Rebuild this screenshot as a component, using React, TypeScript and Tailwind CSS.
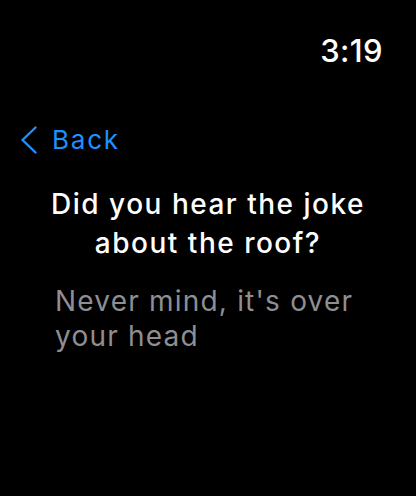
// Watch-style joke screen: clock, back button, prompt and punchline.
export default function App() {
  return (
    <div
      className="w-[416px] h-[496px] bg-black text-white flex flex-col overflow-hidden"
      style={{ fontFamily: "Inter, 'Noto Sans', sans-serif" }}
    >
      <div className="flex justify-end pt-[33px] pr-[33px]">
        <span className="text-[31px] font-medium leading-[36px] tracking-[0.4px]">3:19</span>
      </div>

      <button className="flex items-center mt-[55px] ml-[21px] text-[#1e90ff] self-start">
        <svg width="16" height="28" viewBox="0 0 16 28" fill="none" stroke="currentColor" strokeWidth="2.4" strokeLinecap="round" strokeLinejoin="round">
          <polyline points="14.5,1.5 1.5,14 14.5,26.5" />
        </svg>
        <span className="ml-[15px] text-[26px] leading-[32px] tracking-[1.8px]">Back</span>
      </button>

      <h1 className="mt-[29px] px-[36px] text-center text-[28px] font-medium leading-[39px] tracking-[1.5px]">
        Did you hear the joke about the roof?
      </h1>

      <p className="mt-[21px] px-[55px] text-[28px] leading-[35px] text-[#8e8e93] tracking-[1.2px]">
        Never mind, it's over your head
      </p>
    </div>
  );
}
